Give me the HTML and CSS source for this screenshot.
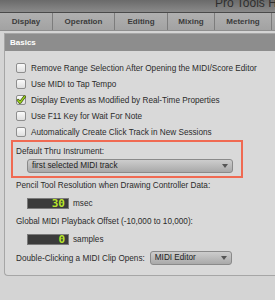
FILE: index.html
```html
<!DOCTYPE html>
<html>
<head>
    <meta charset="UTF-8">
    <title>MIDI Preferences</title>
    <link rel="stylesheet" href="styles.css">
</head>
<body>
    <div class="titlebar"><span class="title">Pro Tools HD</span></div>

    <div class="tabs">
        <div class="tab tab-display">Display</div>
        <div class="tab tab-operation">Operation</div>
        <div class="tab tab-editing">Editing</div>
        <div class="tab tab-mixing">Mixing</div>
        <div class="tab tab-metering">Metering</div>
        <div class="tab tab-more"></div>
    </div>

    <div class="content">
        <div class="panel">
            <div class="panel-head">Basics</div>
            <div class="panel-body">
                <div class="check-row"><span class="checkbox"></span>Remove Range Selection After Opening the MIDI/Score Editor</div>
                <div class="check-row"><span class="checkbox"></span>Use MIDI to Tap Tempo</div>
                <div class="check-row">
                    <span class="checkbox checked">
                        <svg width="10" height="10" viewBox="0 0 10 10"><path d="M2 5.2 L4 7.6 L8.6 1.6" fill="none" stroke="#3c4a10" stroke-width="2.6" stroke-linecap="round" stroke-linejoin="round"/><path d="M2 5.2 L4 7.6 L8.6 1.6" fill="none" stroke="#9bd41e" stroke-width="1.5" stroke-linecap="round" stroke-linejoin="round"/></svg>
                    </span>Display Events as Modified by Real-Time Properties
                </div>
                <div class="check-row"><span class="checkbox"></span>Use F11 Key for Wait For Note</div>
                <div class="check-row"><span class="checkbox"></span>Automatically Create Click Track in New Sessions</div>

                <div class="highlight">
                    <div class="label">Default Thru Instrument:</div>
                    <div class="select select-wide">first selected MIDI track<span class="arrow"></span></div>
                </div>

                <div class="label">Pencil Tool Resolution when Drawing Controller Data:</div>
                <div class="field-row"><span class="lcd">30</span>msec</div>

                <div class="label">Global MIDI Playback Offset (-10,000 to 10,000):</div>
                <div class="field-row"><span class="lcd">0</span>samples</div>

                <div class="inline-row">
                    Double-Clicking a MIDI Clip Opens:
                    <div class="select select-short">MIDI Editor<span class="arrow"></span></div>
                </div>
            </div>
        </div>
    </div>
</body>
</html>
```

FILE: styles.css
```css
body {
    margin: 0;
    width: 275px;
    height: 300px;
    overflow: hidden;
    background: #d4d4d4;
    font-family: "Liberation Sans", Arial, sans-serif;
    font-size: 8.2px;
    color: #2b2b2b;
}
.titlebar {
    height: 12px;
    background: linear-gradient(#6a6a6a, #8a8a8a);
    border-bottom: 1px solid #4a4a4a;
    overflow: hidden;
    position: relative;
}
.title {
    position: absolute;
    left: 215px;
    top: -4px;
    font-size: 12px;
    line-height: 14px;
    color: #2e2e2e;
    white-space: nowrap;
}
.tabs {
    display: flex;
    height: 17px;
    background: linear-gradient(#b0b0b0, #a2a2a2);
    border-bottom: 1px solid #8f8f8f;
}
.tab {
    display: flex;
    align-items: center;
    justify-content: center;
    font-weight: bold;
    font-size: 8px;
    color: #3b3b3b;
    border-right: 1px solid #7c7c7c;
}
.tab-display { width: 52px; }
.tab-operation { width: 61px; }
.tab-editing { width: 52px; }
.tab-mixing { width: 46px; }
.tab-metering { width: 56px; }
.tab-more { flex: 1; border-right: none; }
.content {
    padding: 2px 0 0 4px;
}
.panel {
    border: 1px solid #a6a6a6;
    border-right: none;
    border-radius: 0 0 0 4px;
    background: #d9d9d9;
}
.panel-head {
    height: 17px;
    line-height: 18px;
    padding-left: 5px;
    background: #8d8d8d;
    color: #fff;
    font-weight: bold;
    font-size: 8px;
}
.panel-body {
    padding: 9px 0 10px 11px;
}
.check-row {
    display: flex;
    align-items: center;
    height: 16px;
    white-space: nowrap;
}
.checkbox {
    flex: none;
    box-sizing: border-box;
    width: 10px;
    height: 10px;
    margin-right: 5px;
    border: 1px solid #8e8e8e;
    border-radius: 2px;
    background: linear-gradient(#fafafa, #dedede);
    display: flex;
    align-items: center;
    justify-content: center;
}
.checkbox svg {
    flex: none;
}
.highlight {
    width: 232px;
    box-sizing: border-box;
    margin-left: -5px;
    padding: 3px 0 0 3px;
    height: 38px;
    border: 2px solid #f06a52;
}
.label {
    height: 13px;
    line-height: 13px;
    white-space: nowrap;
}
.select {
    position: relative;
    box-sizing: border-box;
    height: 14px;
    line-height: 12px;
    padding-left: 4px;
    border: 1px solid #8a8a8a;
    border-radius: 3px;
    background: linear-gradient(#cdcdcd, #a9a9a9);
    color: #222;
    white-space: nowrap;
}
.select-wide {
    width: 206px;
    margin: 1px 0 0 11px;
}
.select-short {
    width: 82px;
    margin-left: 5px;
}
.arrow {
    position: absolute;
    right: 4px;
    top: 4px;
    width: 0;
    height: 0;
    border-left: 3px solid transparent;
    border-right: 3px solid transparent;
    border-top: 4px solid #555;
}
.highlight + .label {
    margin-top: 1px;
}
.field-row {
    display: flex;
    align-items: center;
    height: 12px;
    margin: 5px 0 6px 11px;
}
.lcd {
    box-sizing: border-box;
    width: 42px;
    height: 11px;
    margin-right: 4px;
    padding-right: 3px;
    background: #3b3b3b;
    border: 1px solid #7a7a7a;
    color: #b9e62a;
    text-align: right;
    font-family: "DejaVu Sans Mono", monospace;
    font-weight: bold;
    font-size: 11px;
    line-height: 9px;
}
.inline-row {
    display: flex;
    align-items: center;
    height: 14px;
    margin-top: 2px;
    white-space: nowrap;
}
```
